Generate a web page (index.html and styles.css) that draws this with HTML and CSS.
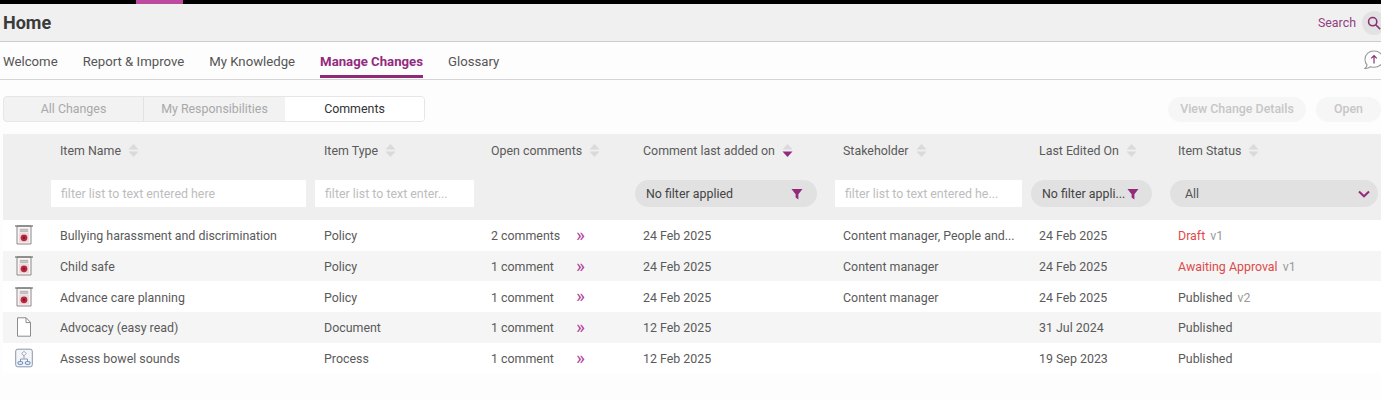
FILE: index.html
```html
<!DOCTYPE html>
<html lang="en">
<head>
<meta charset="utf-8">
<title>Home</title>
<link rel="stylesheet" href="styles.css">
</head>
<body>
<svg class="defs" width="0" height="0" aria-hidden="true">
  <symbol id="sort" viewBox="0 0 11 15"><path d="M5.5 1 10.5 6.5H.5Z"/><path d="M.5 8.5h10l-5 5.5Z"/></symbol>
  <symbol id="funnel" viewBox="0 0 12 12"><path d="M.5 1h11L7.4 6.2V11.5L4.6 9.6V6.2Z"/></symbol>
  <symbol id="policy" viewBox="0 0 18 20">
    <path d="M2 1h14v18H2Z" fill="#fbf4f4" stroke="#8a8a8a" stroke-width="1"/>
    <path d="M0 1h18" stroke="#666" stroke-width="1.100"/>
    <path d="M4.500 3.500h9v4h-9Z" fill="#d9dbdf"/>
    <path d="M5 4.700h8M5 6.200h8" stroke="#939393" stroke-width=".6"/>
    <rect x="4" y="8" width="10" height="9.500" fill="#efd9dc"/>
    <circle cx="9" cy="12.800" r="3.400" fill="#b92a42"/>
    <circle cx="9" cy="12.800" r="1.300" fill="#7e1a2c"/>
  </symbol>
  <symbol id="doc" viewBox="0 0 16 20"><path d="M1.5.8h8.6l4.4 4.6v13.8h-13Z" fill="#fff" stroke="#8b8b8b"/><path d="M10 .8v4.8h4.5" fill="none" stroke="#8b8b8b"/></symbol>
  <symbol id="process" viewBox="0 0 18 19">
    <rect x=".7" y=".7" width="16.6" height="17.6" rx="2" fill="#f2f5fa" stroke="#8b95a8"/>
    <path d="M9 7v3M5.5 13v-2.500h7V13" fill="none" stroke="#7c8493" stroke-width=".8"/>
    <path d="M9 2.800 11.200 5 9 7.200 6.800 5Z" fill="#fff" stroke="#7c8493" stroke-width=".8"/>
    <rect x="2.800" y="13" width="5" height="3" rx="1.500" fill="#dbe6f6" stroke="#4f76b5" stroke-width=".8"/>
    <rect x="10.200" y="13" width="5" height="3" rx="1.500" fill="#dbe6f6" stroke="#4f76b5" stroke-width=".8"/>
  </symbol>
</svg>

<div class="topbar"><span class="topbar-mark"></span></div>

<header class="page-head">
  <h1 class="title">Home</h1>
  <div class="search">
    <span class="search-label">Search</span>
    <span class="search-btn">
      <svg class="search-icon" viewBox="0 0 16 16"><circle cx="6.500" cy="6.500" r="4.700"/><path d="M10 10l5 5"/></svg>
    </span>
  </div>
</header>

<nav class="nav">
  <a class="nav-item">Welcome</a>
  <a class="nav-item">Report &amp; Improve</a>
  <a class="nav-item">My Knowledge</a>
  <a class="nav-item is-active">Manage Changes</a>
  <a class="nav-item">Glossary</a>
  <svg class="upload" viewBox="0 0 20 20"><path class="upload-b" d="M10 2.500c4.400 0 7.500 2.900 7.500 6.800s-3.100 6.800-7.500 6.800c-1.100 0-2.100-.2-3-.5-1.200 1-2.800 1.500-4.500 1.400 1-.8 1.600-1.800 1.700-2.900-1.100-1.200-1.700-3-1.700-4.800 0-3.900 3.100-6.800 7.500-6.800Z"/><path class="upload-a" d="M10 13V6.500M7.700 8.700 10 6.300l2.300 2.400"/></svg>
</nav>

<main class="main">
  <div class="toolbar">
    <div class="tabs">
      <span class="tab tab-a">All Changes</span>
      <span class="tab tab-b">My Responsibilities</span>
      <span class="tab tab-c is-on">Comments</span>
    </div>
    <div class="actions">
      <span class="ghost ghost-a">View Change Details</span>
      <span class="ghost ghost-b">Open</span>
    </div>
  </div>

  <section class="table">
    <div class="head-row">
      <span></span>
      <span class="th">Item Name <svg class="sort"><use href="#sort"/></svg></span>
      <span class="th">Item Type <svg class="sort"><use href="#sort"/></svg></span>
      <span class="th">Open comments <svg class="sort"><use href="#sort"/></svg></span>
      <span class="th">Comment last added on <svg class="sort sort-down" viewBox="0 0 11 15"><path class="s-up" d="M5.500 1 10.500 6.500H.5Z"/><path class="s-dn" d="M.5 8.500h10l-5 5.500Z"/></svg></span>
      <span class="th">Stakeholder <svg class="sort"><use href="#sort"/></svg></span>
      <span class="th">Last Edited On <svg class="sort"><use href="#sort"/></svg></span>
      <span class="th">Item Status <svg class="sort"><use href="#sort"/></svg></span>
    </div>
    <div class="filter-row">
      <span></span>
      <span class="fc f-name"><span class="input">filter list to text entered here</span></span>
      <span class="fc f-type"><span class="input">filter list to text enter...</span></span>
      <span class="fc"></span>
      <span class="fc f-added"><span class="pill"><span class="pill-t">No filter applied</span><svg class="funnel"><use href="#funnel"/></svg></span></span>
      <span class="fc f-stake"><span class="input">filter list to text entered he...</span></span>
      <span class="fc f-edit"><span class="pill pill-tight"><span class="pill-t">No filter appli...</span><svg class="funnel"><use href="#funnel"/></svg></span></span>
      <span class="fc f-status"><span class="pill pill-status"><span class="pill-t">All</span><svg class="chev" viewBox="0 0 12 8"><path d="M1 1.500 6 6.300 11 1.500"/></svg></span></span>
    </div>

    <div class="row">
      <span class="ic"><svg class="ic-svg"><use href="#policy"/></svg></span>
      <span class="td">Bullying harassment and discrimination</span>
      <span class="td">Policy</span>
      <span class="td cm"><span class="cm-t">2 comments</span><span class="go">»</span></span>
      <span class="td">24 Feb 2025</span>
      <span class="td">Content manager, People and...</span>
      <span class="td">24 Feb 2025</span>
      <span class="td"><span class="st-red">Draft</span> <span class="ver">v1</span></span>
    </div>
    <div class="row alt">
      <span class="ic"><svg class="ic-svg"><use href="#policy"/></svg></span>
      <span class="td">Child safe</span>
      <span class="td">Policy</span>
      <span class="td cm"><span class="cm-t">1 comment</span><span class="go">»</span></span>
      <span class="td">24 Feb 2025</span>
      <span class="td">Content manager</span>
      <span class="td">24 Feb 2025</span>
      <span class="td"><span class="st-red">Awaiting Approval</span> <span class="ver">v1</span></span>
    </div>
    <div class="row">
      <span class="ic"><svg class="ic-svg"><use href="#policy"/></svg></span>
      <span class="td">Advance care planning</span>
      <span class="td">Policy</span>
      <span class="td cm"><span class="cm-t">1 comment</span><span class="go">»</span></span>
      <span class="td">24 Feb 2025</span>
      <span class="td">Content manager</span>
      <span class="td">24 Feb 2025</span>
      <span class="td">Published <span class="ver">v2</span></span>
    </div>
    <div class="row alt">
      <span class="ic"><svg class="ic-svg"><use href="#doc"/></svg></span>
      <span class="td">Advocacy (easy read)</span>
      <span class="td">Document</span>
      <span class="td cm"><span class="cm-t">1 comment</span><span class="go">»</span></span>
      <span class="td">12 Feb 2025</span>
      <span class="td"></span>
      <span class="td">31 Jul 2024</span>
      <span class="td">Published</span>
    </div>
    <div class="row">
      <span class="ic"><svg class="ic-svg"><use href="#process"/></svg></span>
      <span class="td">Assess bowel sounds</span>
      <span class="td">Process</span>
      <span class="td cm"><span class="cm-t">1 comment</span><span class="go">»</span></span>
      <span class="td">12 Feb 2025</span>
      <span class="td"></span>
      <span class="td">19 Sep 2023</span>
      <span class="td">Published</span>
    </div>
  </section>
</main>
</body>
</html>
```
FILE: styles.css
```css
:root {
  --cols: 48px 264px 167px 153px 200px 196px 139px 1fr;
  --plum: #932a7e;
}
* { box-sizing: border-box; }
body {
  margin: 0;
  height: 400px;
  overflow: hidden;
  background: #fdfdfd;
  color: #5a5a5a;
  font: 12.4px/1.4 Roboto, "Liberation Sans", sans-serif;
}
.defs { position: absolute; }

.topbar { height: 4px; background: #000; padding-left: 136px; }
.topbar-mark { display: block; width: 47px; height: 4px; background: #bd4a9f; }

.page-head {
  height: 38px;
  background: #f0f0f0;
  border-bottom: 1px solid #ccc;
  display: flex;
  align-items: center;
  justify-content: space-between;
  padding: 1px 0 0 3px;
}
.title { margin: 0; font-size: 18px; font-weight: 700; color: #3a3a3a; }
.search { display: flex; align-items: center; gap: 6px; margin-right: -5px; }
.search-label { color: #93407f; font-size: 12.400px; }
.search-btn {
  width: 24px; height: 24px; border-radius: 50%;
  background: #e2e2e2;
  display: flex; align-items: center; justify-content: center;
}
.search-icon { width: 14px; height: 14px; fill: none; stroke: #8a2f74; stroke-width: 1.800; }

.nav {
  height: 38px;
  border-bottom: 1px solid #d4d4d4;
  display: flex;
  gap: 25px;
  padding-left: 3px;
  position: relative;
}
.nav-item {
  font-size: 13.200px;
  line-height: 1;
  color: #555;
  height: 36px;
  padding-top: 13px;
}
.nav-item.is-active {
  color: var(--plum);
  font-weight: 700;
  border-bottom: 3px solid #8f2a78;
}
.upload { position: absolute; top: 6px; right: -5px; width: 24px; height: 24px; }
.upload-b { fill: #fff; stroke: #999; stroke-width: .9; }
.upload-a { fill: none; stroke: #8a2f74; stroke-width: 1; }

.toolbar {
  display: flex;
  justify-content: space-between;
  align-items: center;
  padding: 16px 0 12px 3px;
  height: 54px;
}
.tabs {
  display: flex;
  width: 422px;
  height: 26px;
  border: 1px solid #e6e6e6;
  border-radius: 4px;
  overflow: hidden;
  background: #f2f2f2;
}
.tab {
  display: flex; align-items: center; justify-content: center;
  color: #a9a9a9;
}
.tab-a { width: 140px; border-right: 1px solid #e2e2e2; }
.tab-b { width: 141px; }
.tab-c { flex: 1; }
.tab.is-on { background: #fff; color: #333; }

.actions { display: flex; gap: 10px; }
.ghost {
  height: 25px; border-radius: 13px;
  background: #f6f6f6;
  color: #c6c6c6;
  font-weight: 500;
  display: flex; align-items: center; justify-content: center;
}
.ghost-a { width: 138px; }
.ghost-b { width: 65px; }

.table { margin-left: 3px; }
.head-row, .filter-row, .row {
  display: grid;
  grid-template-columns: var(--cols);
  align-items: center;
}
.head-row { height: 33px; background: #efefef; }
.filter-row { height: 53px; background: #efefef; padding: 13px 0; }
.th { padding-left: 9px; display: flex; align-items: center; gap: 7px; white-space: nowrap; }
.th:nth-child(n+5), .td:nth-child(n+5) { padding-left: 8px; }
.sort { width: 11px; height: 15px; fill: #dadada; }
.s-up { fill: #dadada; }
.s-dn { fill: var(--plum); }

.fc { display: block; height: 27px; }
.f-name { padding-right: 9px; }
.f-type { padding-right: 8px; }
.f-added { padding-right: 18px; }
.f-stake { padding-right: 9px; }
.f-edit { padding-right: 18px; }
.f-status { padding-right: 3px; }
.input {
  display: flex; align-items: center;
  height: 27px;
  background: #fff;
  padding-left: 10px;
  color: #bdbdbd;
  white-space: nowrap;
}
.pill {
  display: flex; align-items: center; justify-content: space-between;
  height: 27px;
  border-radius: 14px;
  background: #e1e1e1;
  color: #444;
  padding: 0 14px 0 11px;
  white-space: nowrap;
}
.pill-tight { padding-right: 13px; }
.pill-status { padding: 0 8px 0 15px; color: #555; }
.funnel { width: 12px; height: 12px; fill: var(--plum); flex: none; }
.chev { width: 12px; height: 8px; fill: none; stroke: var(--plum); stroke-width: 2; }

.row { height: 30.700px; background: #fff; padding-top: 1px; }
.row.alt { background: #f5f5f5; }
.ic { display: flex; padding: 0 0 1px 12px; }
.ic-svg { width: 18px; height: 20px; }
.td { padding-left: 9px; white-space: nowrap; }
.cm { display: flex; align-items: center; }
.cm-t { width: 85px; }
.go { color: #b0459b; font-size: 19px; line-height: 14px; height: 16px; }
.st-red { color: #dd4a4a; }
.ver { color: #9a9a9a; margin-left: 2px; }
```
